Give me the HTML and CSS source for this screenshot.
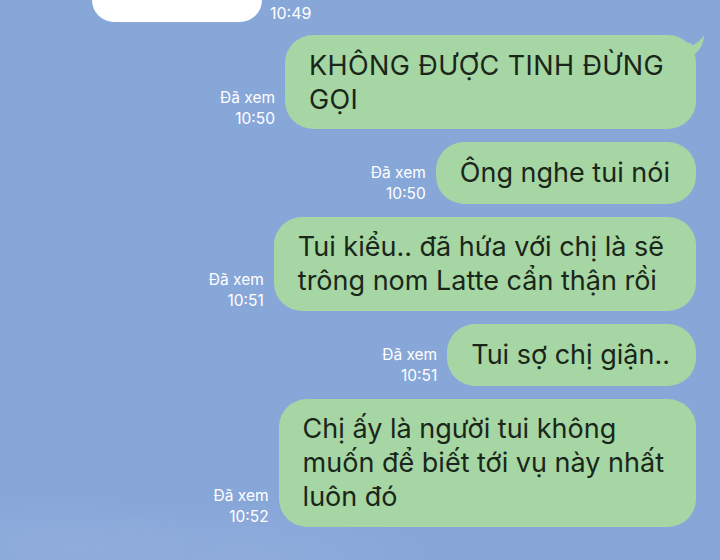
FILE: index.html
```html
<!DOCTYPE html>
<html lang="vi">
<head>
  <meta charset="UTF-8">
  <title>Chat</title>
  <link rel="stylesheet" href="styles.css">
</head>
<body>

<div class="chat">
  <div class="row incoming">
    <div class="bubble white"></div>
    <div class="meta">10:49</div>
  </div>

  <div class="row outgoing">
    <div class="meta">Đã xem<br>10:50</div>
    <div class="bubble green caps">
      KHÔNG ĐƯỢC TINH ĐỪNG<br>GỌI
      <svg class="tail" width="30" height="26" viewBox="0 0 30 26">
        <path d="M0 6 C8 6 14 7 18 10 C22 8 26 5 29 0 C29 8 25 15 20 19 L10 26 Z" fill="#a5d6a3"/>
      </svg>
    </div>
  </div>

  <div class="row outgoing">
    <div class="meta">Đã xem<br>10:50</div>
    <div class="bubble green single">Ông nghe tui nói</div>
  </div>

  <div class="row outgoing">
    <div class="meta">Đã xem<br>10:51</div>
    <div class="bubble green">Tui kiểu.. đã hứa với chị là sẽ<br>trông nom Latte cẩn thận rồi</div>
  </div>

  <div class="row outgoing">
    <div class="meta">Đã xem<br>10:51</div>
    <div class="bubble green single">Tui sợ chị giận..</div>
  </div>

  <div class="row outgoing">
    <div class="meta">Đã xem<br>10:52</div>
    <div class="bubble green">Chị ấy là người tui không<br>muốn để biết tới vụ này nhất<br>luôn đó</div>
  </div>
</div>

</body>
</html>
```

FILE: styles.css
```css
body {
  margin: 0;
  width: 720px;
  height: 560px;
  overflow: hidden;
  font-family: Inter, 'Noto Sans', sans-serif;
  background-color: #88a7d9;
  background-image:
    radial-gradient(ellipse 160px 50px at 60px 545px, rgba(255, 255, 255, 0.06), transparent),
    radial-gradient(ellipse 200px 60px at 240px 560px, rgba(255, 255, 255, 0.05), transparent);
}

.chat {
  display: flex;
  flex-direction: column;
  gap: 13px;
  padding: 0 24px 0 92px;
}

.row {
  display: flex;
  align-items: flex-end;
  gap: 10px;
}

.row.outgoing {
  justify-content: flex-end;
}

.row.incoming {
  margin-top: -40px;
  gap: 8px;
}

.meta {
  color: #fff;
  font-size: 15.5px;
  line-height: 21px;
  text-align: right;
  white-space: nowrap;
}

.row.incoming .meta {
  font-size: 16px;
  margin-bottom: -2px;
}

.bubble {
  position: relative;
  border-radius: 28px;
  color: #1a261a;
  font-size: 27px;
  line-height: 34px;
  padding: 13px 32px 13px 24px;
}

.bubble.single {
  padding: 14px 26px 14px 24px;
}

.bubble.caps {
  letter-spacing: 0.4px;
  padding-top: 14px;
  padding-bottom: 12px;
}

.bubble.white {
  background: #fff;
  width: 170px;
  height: 62px;
  padding: 0;
  border-radius: 22px;
}

.bubble.green {
  background: #a5d6a3;
}

.tail {
  position: absolute;
  top: 0;
  right: -9px;
}
```
